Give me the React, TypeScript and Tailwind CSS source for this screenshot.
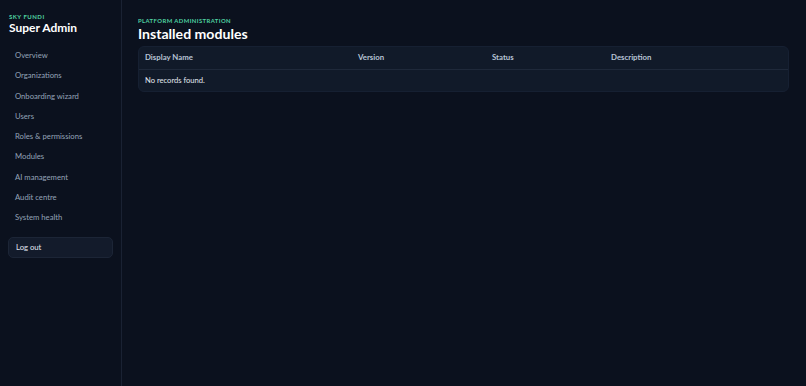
import React from 'react'

const navItems = [
  'Overview',
  'Organizations',
  'Onboarding wizard',
  'Users',
  'Roles & permissions',
  'Modules',
  'AI management',
  'Audit centre',
  'System health',
]

export default function App() {
  return (
    <div
      className="flex min-h-[386px] w-full bg-[#0b111e] text-[#e2e8f0]"
      style={{ fontFamily: 'Lato, "Noto Sans", sans-serif' }}
    >
      {/* Sidebar */}
      <aside className="w-[122px] shrink-0 border-r border-[#1a2233] px-[8px] pt-[13px]">
        <div className="px-px text-[6px] font-bold uppercase leading-[8px] tracking-[0.08em] text-[#4fd1a1]">Sky Fundi</div>
        <div className="px-px text-[12px] font-bold leading-[14px] text-white">Super Admin</div>

        <nav className="mt-[10px] flex flex-col">
          {navItems.map((item) => (
            <div key={item} className="h-[20.25px] px-[7px] text-[7.7px] leading-[20px] text-[#94a3b8]">
              {item}
            </div>
          ))}
        </nav>

        <button className="mt-[10px] h-[21px] w-[105px] rounded-[5px] border border-[#1c2536] bg-[#131b2b] px-[7px] text-left text-[7.7px] text-[#e2e8f0]">
          Log out
        </button>
      </aside>

      {/* Main */}
      <main className="flex-1 pl-[16px] pr-[17px] pt-[17px]">
        <div className="text-[5.9px] font-bold uppercase leading-[8px] tracking-[0.07em] text-[#4fd1a1]">Platform administration</div>
        <h1 className="text-[14.1px] font-bold leading-[18px] text-white">Installed modules</h1>

        <div className="mt-[3px] overflow-hidden rounded-[6px] border border-[#162032] bg-[#111a29]">
          <table className="w-full table-fixed text-left">
            <thead>
              <tr className="border-b border-[#1f293a]">
                <th className="h-[22px] w-[219px] pl-[6px] text-[7.8px] font-bold text-[#b8c4d6]">Display Name</th>
                <th className="w-[134px] text-[7.8px] font-bold text-[#b8c4d6]">Version</th>
                <th className="w-[119px] text-[7.8px] font-bold text-[#b8c4d6]">Status</th>
                <th className="text-[7.8px] font-bold text-[#b8c4d6]">Description</th>
              </tr>
            </thead>
            <tbody>
              <tr>
                <td colSpan={4} className="h-[22px] pl-[6px] pt-[1px] text-[7.6px] text-[#e2e8f0]">
                  No records found.
                </td>
              </tr>
            </tbody>
          </table>
        </div>
      </main>
    </div>
  )
}
